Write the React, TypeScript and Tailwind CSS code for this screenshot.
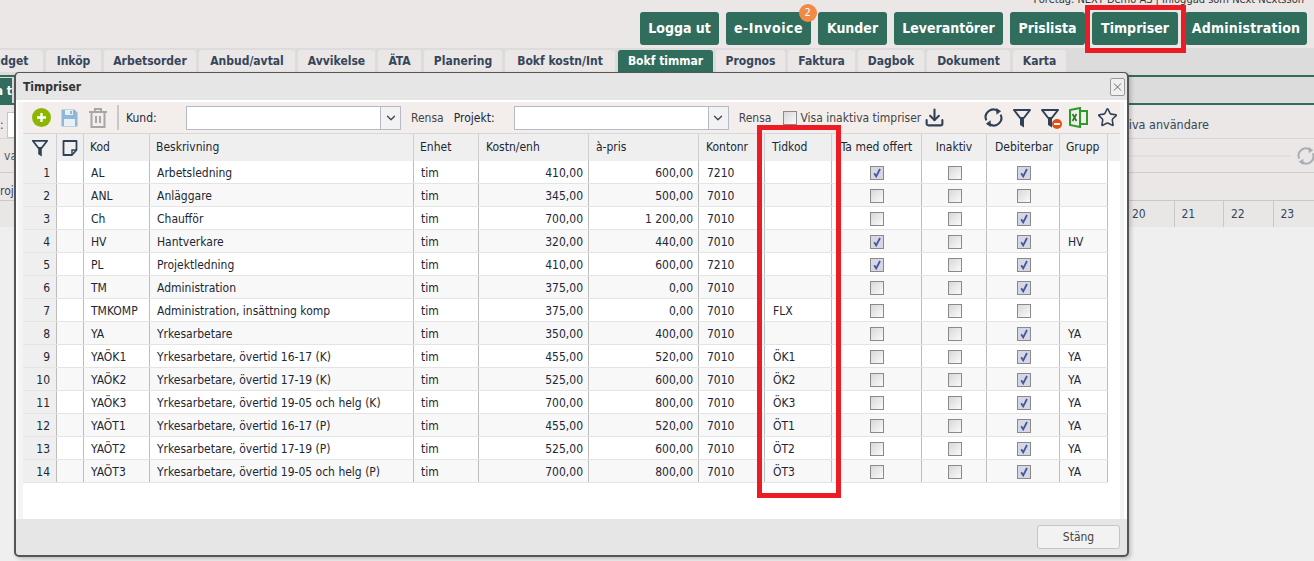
import React from "react";
import { Star, Download, ChevronDown, X } from "lucide-react";

const navButtons = [
  { label: "Logga ut", w: "w-[79px]" },
  { label: "e-Invoice", w: "w-[85px] tracking-[0.5px]", badge: 2 },
  { label: "Kunder", w: "w-[69px]" },
  { label: "Leverantörer", w: "w-[109px]" },
  { label: "Prislista", w: "w-[75px]" },
  { label: "Timpriser", w: "w-[86px]" },
  { label: "Administration", w: "w-[122px] tracking-[0.2px]" },
];

const tabs = [
  { label: "Budget", w: "w-[73px]" },
  { label: "Inköp", w: "w-[55px]" },
  { label: "Arbetsorder", w: "w-[92px]" },
  { label: "Anbud/avtal", w: "w-[96px]" },
  { label: "Avvikelse", w: "w-[77px]" },
  { label: "ÄTA", w: "w-[43px]" },
  { label: "Planering", w: "w-[78px]" },
  { label: "Bokf kostn/Int", w: "w-[110px]" },
  { label: "Bokf timmar", w: "w-[95px]", active: true },
  { label: "Prognos", w: "w-[69px]" },
  { label: "Faktura", w: "w-[67px]" },
  { label: "Dagbok", w: "w-[66px]" },
  { label: "Dokument", w: "w-[83px]" },
  { label: "Karta", w: "w-[53px]" },
];

const gridCols =
  "grid w-[1085px] grid-cols-[34px_27px_66px_264px_65px_110px_110px_66px_67px_90px_65px_73px_48px]";

type Row = {
  kod: string;
  besk: string;
  kostn: string;
  pris: string;
  konto: string;
  tidkod?: string;
  offert?: boolean;
  debit?: boolean;
  grupp?: string;
};

const rows: Row[] = [
  { kod: "AL", besk: "Arbetsledning", kostn: "410,00", pris: "600,00", konto: "7210", offert: true, debit: true },
  { kod: "ANL", besk: "Anläggare", kostn: "345,00", pris: "500,00", konto: "7010" },
  { kod: "Ch", besk: "Chaufför", kostn: "700,00", pris: "1 200,00", konto: "7010", debit: true },
  { kod: "HV", besk: "Hantverkare", kostn: "320,00", pris: "440,00", konto: "7010", offert: true, debit: true, grupp: "HV" },
  { kod: "PL", besk: "Projektledning", kostn: "410,00", pris: "600,00", konto: "7210", offert: true, debit: true },
  { kod: "TM", besk: "Administration", kostn: "375,00", pris: "0,00", konto: "7010", debit: true },
  { kod: "TMKOMP", besk: "Administration, insättning komp", kostn: "375,00", pris: "0,00", konto: "7010", tidkod: "FLX" },
  { kod: "YA", besk: "Yrkesarbetare", kostn: "350,00", pris: "400,00", konto: "7010", debit: true, grupp: "YA" },
  { kod: "YAÖK1", besk: "Yrkesarbetare, övertid 16-17 (K)", kostn: "455,00", pris: "520,00", konto: "7010", tidkod: "ÖK1", debit: true, grupp: "YA" },
  { kod: "YAÖK2", besk: "Yrkesarbetare, övertid 17-19 (K)", kostn: "525,00", pris: "600,00", konto: "7010", tidkod: "ÖK2", debit: true, grupp: "YA" },
  { kod: "YAÖK3", besk: "Yrkesarbetare, övertid 19-05 och helg (K)", kostn: "700,00", pris: "800,00", konto: "7010", tidkod: "ÖK3", debit: true, grupp: "YA" },
  { kod: "YAÖT1", besk: "Yrkesarbetare, övertid 16-17 (P)", kostn: "455,00", pris: "520,00", konto: "7010", tidkod: "ÖT1", debit: true, grupp: "YA" },
  { kod: "YAÖT2", besk: "Yrkesarbetare, övertid 17-19 (P)", kostn: "525,00", pris: "600,00", konto: "7010", tidkod: "ÖT2", debit: true, grupp: "YA" },
  { kod: "YAÖT3", besk: "Yrkesarbetare, övertid 19-05 och helg (P)", kostn: "700,00", pris: "800,00", konto: "7010", tidkod: "ÖT3", debit: true, grupp: "YA" },
];

const headers = [
  { label: "Kod", cls: "pl-[6px]" },
  { label: "Beskrivning", cls: "pl-[6px]" },
  { label: "Enhet", cls: "pl-[6px]" },
  { label: "Kostn/enh", cls: "pl-[7px]" },
  { label: "à-pris", cls: "pl-[7px]" },
  { label: "Kontonr", cls: "pl-[7px]" },
  { label: "Tidkod", cls: "pl-[7px]" },
  { label: "Ta med offert", cls: "justify-center" },
  { label: "Inaktiv", cls: "justify-center" },
  { label: "Debiterbar", cls: "justify-center pl-[2px]" },
  { label: "Grupp", cls: "pl-[6px]" },
];

const Check = ({ on }: { on?: boolean }) => (
  <span
    className={`flex h-[14px] w-[14px] items-center justify-center border border-[#8a8a8a] ${
      on ? "bg-[#d5d8e4]" : "bg-gradient-to-br from-[#d8d8d8] to-[#fafafa]"
    }`}
  >
    {on && (
      <svg width="10" height="10" viewBox="0 0 10 10">
        <path d="M2.2 5.2 L4.2 8.4 L8 1" fill="none" stroke="#47569c" strokeWidth="1.8" />
      </svg>
    )}
  </span>
);

const RefreshIcon = ({ color, size }: { color: string; size: number }) => (
  <svg width={size} height={size} viewBox="0 0 20 20" fill="none" stroke={color} strokeWidth="2.2">
    <path d="M2.5 13 A8 8 0 0 1 14.5 3.2" />
    <path d="M17.5 7 A8 8 0 0 1 5.5 16.8" />
    <path d="M13 0 L18 3.5 L13 7 Z" fill={color} stroke="none" />
    <path d="M7 13 L2 16.5 L7 20 Z" fill={color} stroke="none" />
  </svg>
);

const FunnelIcon = ({ size }: { size: number }) => (
  <svg width={size} height={size} viewBox="0 0 20 20" fill="none">
    <path d="M2 2h16l-6.2 8H8.2z" stroke="#2f4156" strokeWidth="2" strokeLinejoin="round" />
    <path d="M8 10h4v9.5l-4-2.5z" fill="#2f4156" />
  </svg>
);

const NoteIcon = () => (
  <svg width="16" height="16" viewBox="0 0 16 16" fill="none" stroke="#2f4156" strokeWidth="1.8">
    <path d="M1.5 1h13v9l-4.5 5H1.5z" strokeLinejoin="round" />
    <path d="M14.5 10H10v5" strokeWidth="1.4" />
  </svg>
);

export default function App() {
  return (
    <div className="relative h-[561px] w-[1314px] overflow-hidden bg-[#efefef] font-['DejaVu_Sans',sans-serif] text-[12px] font-stretch-condensed text-[#1d2733]">
      {/* top header */}
      <div className="h-[48px] bg-[#ebe7e6] pt-[12px]">
        <div className="absolute right-[10px] top-[-6px] text-[11px] leading-[12px] text-[#333]">
          Företag: NEXT Demo AS | Inloggad som Next Nextsson
        </div>
        <div className="ml-[640px] flex gap-[7px]">
          {navButtons.map((b) => (
            <div
              key={b.label}
              className={`relative flex h-[33px] items-center justify-center rounded-[3px] bg-[#306d5d] text-[14px] font-bold text-white ${b.w}`}
            >
              {b.label}
              {b.badge && (
                <span className="absolute right-[-6px] top-[-8px] flex h-[18px] w-[18px] items-center justify-center rounded-full bg-[#f08a45] text-[11px] font-normal">
                  {b.badge}
                </span>
              )}
            </div>
          ))}
        </div>
      </div>

      {/* tabs */}
      <div className="flex h-[27px] bg-[#dcdcdc]">
        <div className="ml-[-30px] mt-[2px] flex gap-[3px]">
          {tabs.map((t) => (
            <div
              key={t.label}
              className={`flex h-[22px] items-center justify-center rounded-t-[3px] text-[12px] font-bold ${t.w} ${
                t.active ? "bg-[#306d5d] text-white" : "bg-[#ebe7e6] text-[#35465a]"
              }`}
            >
              {t.label}
            </div>
          ))}
        </div>
      </div>

      {/* sub tab band */}
      <div className="h-[30px] border-y-2 border-[#306d5d] bg-[#dcdcdc]">
        <div className="mt-[1px] flex h-[25px] w-[12px] items-center justify-end overflow-hidden bg-[#306d5d] text-[12px] font-bold whitespace-nowrap text-white">
          a t
        </div>
      </div>

      {/* filter row */}
      <div className="flex h-[34px] items-center justify-between border-b border-[#d8d5d4] bg-[#ebe7e6] pr-[105px] pt-[7px]">
        <div className="flex items-center gap-[3px] text-[#7a3030]">
          <span>:</span>
          <span className="h-[26px] w-[8px] border border-[#c4c4c4] bg-white" />
        </div>
        <span className="text-[12.5px] text-[#35465a]">iva användare</span>
      </div>

      <div className="flex h-[34px] items-center border-b border-[#d0cdcc] bg-[#ebe7e6] pl-[4px]">
        <span className="text-[#555]">va</span>
        <span className="ml-auto h-[2px] w-[162px] bg-[#e3dfde]" />
        <div className="ml-[6px] mr-[-1px]">
          <RefreshIcon color="#a8adb2" size={18} />
        </div>
      </div>

      <div className="h-[28px] border-b border-[#c8c8c8] bg-[#ebe7e6] pt-[10px] leading-[16px]">
        <span className="text-[#35465a]">roj</span>
      </div>

      <div className="flex h-[26px] items-center bg-[#e9e7e6]">
        <div className="ml-[1125px] flex">
          {["20", "21", "22", "23"].map((d) => (
            <div
              key={d}
              className="flex h-[26px] w-[49.5px] items-center border-r border-[#c8c8c8] pb-[1px] pl-[7px] text-[#35465a] last:border-r-0"
            >
              {d}
            </div>
          ))}
        </div>
      </div>

      {/* red marks from the screenshot */}
      <div className="absolute left-[1085px] top-[5px] z-20 h-[48px] w-[101px] border-[5px] border-[#ed1c24]" />

      {/* dialog */}
      <div className="absolute left-[14px] top-[72px] z-10 flex h-[485px] w-[1115px] flex-col rounded-[5px] border-2 border-t border-[#555] bg-[#e6e6e6] shadow-[2px_2px_4px_rgba(0,0,0,0.2)]">
        <div className="flex h-[27px] flex-none items-center justify-between pl-[7px] pr-[2px]">
          <span className="font-bold text-[#333]">Timpriser</span>
          <span className="flex h-[18px] w-[15px] items-center justify-center rounded-[2px] border border-[#999] bg-[#f0f0f0]">
            <X size={14} color="#666" strokeWidth={1.8} />
          </span>
        </div>

        <div className="flex min-h-0 flex-1 flex-col bg-white pl-[2px] pr-[3px] pt-[2px]">
          <div className="flex min-h-0 flex-1 flex-col bg-[#f4f4f4] pl-[5px] pr-[4px]">
            {/* toolbar */}
            <div className="flex h-[32px] flex-none items-center border-b border-[#d8d8d8] bg-[#f3eeec]">
              <svg className="ml-[9px]" width="19" height="19" viewBox="0 0 19 19">
                <circle cx="9.5" cy="9.5" r="9.5" fill="#8db600" />
                <path d="M9.5 5v9M5 9.5h9" stroke="#fff" strokeWidth="2.4" />
              </svg>
              <svg className="ml-[10px]" width="17" height="18" viewBox="0 0 17 18">
                <path d="M0.5 0.5h13l3 3v14H0.5z" fill="#8fb8d4" />
                <rect x="4" y="1" width="8" height="5" fill="#e8f0f5" />
                <rect x="9" y="2" width="2" height="3" fill="#8fb8d4" />
                <rect x="3" y="10" width="11" height="7" fill="#e8f0f5" />
              </svg>
              <svg className="ml-[11px]" width="18" height="20" viewBox="0 0 18 20" fill="none" stroke="#a7a7a7" strokeWidth="2">
                <path d="M0 4h18M6 4V1h6v3M2.5 4v15h13V4M7 8v7M11 8v7" />
              </svg>
              <span className="ml-[10px] h-[25px] w-[2px] bg-[#c8c8c8]" />
              <span className="ml-[7px] w-[60px]">Kund:</span>
              <div className="flex h-[24px] w-[215px] border border-[#b5b9c9] bg-white">
                <span className="flex-1" />
                <span className="flex w-[20px] items-center justify-center border-l border-[#b5b9c9] bg-[#f2f2f2]">
                  <ChevronDown size={14} color="#35465a" strokeWidth={2.2} />
                </span>
              </div>
              <span className="ml-[10px] text-[#444]">Rensa</span>
              <span className="ml-[10px] w-[60px]">Projekt:</span>
              <div className="flex h-[24px] w-[215px] border border-[#b5b9c9] bg-white">
                <span className="flex-1" />
                <span className="flex w-[20px] items-center justify-center border-l border-[#b5b9c9] bg-[#f2f2f2]">
                  <ChevronDown size={14} color="#35465a" strokeWidth={2.2} />
                </span>
              </div>
              <span className="ml-[10px] text-[#444]">Rensa</span>
              <span className="ml-[12px]">
                <Check />
              </span>
              <span className="ml-[3px] text-[#444]">Visa inaktiva timpriser</span>
              <Download className="ml-[3px]" size={21} color="#2f4156" strokeWidth={2.4} />
              <span className="ml-[39px]">
                <RefreshIcon color="#2f4156" size={19} />
              </span>
              <span className="ml-[9px]">
                <FunnelIcon size={20} />
              </span>
              <span className="relative ml-[8px] h-[20px] w-[20px]">
                <FunnelIcon size={20} />
                <span className="absolute bottom-[-1px] right-[-2px] flex h-[10px] w-[10px] items-center justify-center rounded-full bg-[#e2500f]">
                  <span className="h-[2px] w-[6px] bg-white" />
                </span>
              </span>
              <svg className="ml-[9px]" width="19" height="21" viewBox="0 0 19 21" fill="none">
                <path d="M1 3l10-2v19L1 18z" stroke="#2a9a2a" strokeWidth="2" />
                <path d="M11 4h7v13h-7" stroke="#2a9a2a" strokeWidth="2" />
                <path d="M3.5 7l4 7M7.5 7l-4 7" stroke="#1c7c1c" strokeWidth="1.6" />
              </svg>
              <Star className="ml-[9px]" size={21} color="#2f4156" strokeWidth={1.8} />
            </div>

            {/* table head */}
            <div className="flex flex-none bg-[#efefef]">
              <div className={`${gridCols} h-[27px] flex-none`}>
                <div className="flex items-center justify-center border-r border-[#cfcfcf]">
                  <FunnelIcon size={18} />
                </div>
                <div className="flex items-center justify-center border-r border-[#cfcfcf]">
                  <NoteIcon />
                </div>
                {headers.map((h) => (
                  <div key={h.label} className={`flex items-center border-r border-[#cfcfcf] pb-[1px] ${h.cls}`}>
                    {h.label}
                  </div>
                ))}
              </div>
              <div className="flex-1" />
            </div>

            {/* table body */}
            <div className="min-h-0 flex-1 bg-white">
              {rows.map((r, i) => (
                <div
                  key={r.kod}
                  className={`${gridCols} h-[23px] border-b border-[#e4e4e4] [&>div]:pt-[1px] ${
                    i % 2 === 0 ? "bg-white" : "bg-[#f8f8f8]"
                  }`}
                >
                  <div className="flex items-center justify-end border-r border-[#bdbdbd] bg-[#efefef] pr-[6px]">
                    {i + 1}
                  </div>
                  <div className="border-r border-[#bdbdbd]" />
                  <div className="flex items-center border-r border-[#bdbdbd] pl-[7px]">{r.kod}</div>
                  <div className="flex items-center border-r border-[#bdbdbd] pl-[7px]">{r.besk}</div>
                  <div className="flex items-center border-r border-[#bdbdbd] pl-[7px]">tim</div>
                  <div className="flex items-center justify-end border-r border-[#bdbdbd] pr-[5px]">{r.kostn}</div>
                  <div className="flex items-center justify-end border-r border-[#bdbdbd] pr-[5px]">{r.pris}</div>
                  <div className="flex items-center border-r border-[#bdbdbd] pl-[8px]">{r.konto}</div>
                  <div className="flex items-center border-r border-[#bdbdbd] pl-[8px]">{r.tidkod}</div>
                  <div className="flex items-center justify-center border-r border-[#bdbdbd]">
                    <Check on={r.offert} />
                  </div>
                  <div className="flex items-center justify-center border-r border-[#bdbdbd] pl-[2px]">
                    <Check />
                  </div>
                  <div className="flex items-center justify-center border-r border-[#bdbdbd] pl-[2px]">
                    <Check on={r.debit} />
                  </div>
                  <div className="flex items-center border-r border-[#bdbdbd] pl-[8px]">{r.grupp}</div>
                </div>
              ))}
            </div>
          </div>
        </div>

        {/* footer */}
        <div className="flex h-[36px] flex-none items-center justify-end pr-[7px]">
          <button className="h-[24px] w-[83px] rounded-[3px] border border-[#c4c4c4] bg-[#f2f2f2] text-[12px] text-[#444]">
            Stäng
          </button>
        </div>
      </div>

      <div className="absolute left-[757px] top-[125px] z-20 h-[373px] w-[84px] border-[5px] border-[#ed1c24]" />
    </div>
  );
}
